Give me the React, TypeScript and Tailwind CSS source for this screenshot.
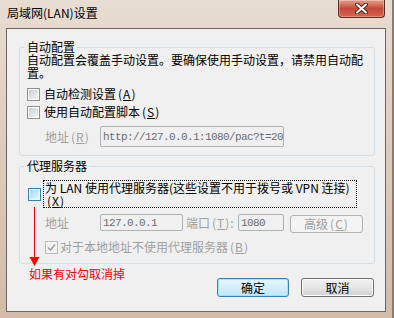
import type { ReactNode } from "react";

type BoxState = "normal" | "hot" | "disabledChecked";

const CheckBox = ({ state = "normal" }: { state?: BoxState }) => {
  if (state === "hot") {
    return (
      <span className="flex h-[13px] w-[13px] shrink-0 items-center justify-center border border-[#3c7fb1] bg-[#e6f5fd]">
        <span className="h-[9px] w-[9px] bg-linear-to-br from-[#a6d8f4] to-[#e9f7fe]" />
      </span>
    );
  }
  if (state === "disabledChecked") {
    return (
      <span className="flex h-[13px] w-[13px] shrink-0 items-center justify-center border border-[#bcbcbc] bg-[#f4f4f4]">
        <svg width="9" height="9" viewBox="0 0 9 9">
          <path d="M1 4.5 L3.5 7 L8 1.5" fill="none" stroke="#a3a3a3" strokeWidth="1.6" />
        </svg>
      </span>
    );
  }
  return (
    <span className="flex h-[13px] w-[13px] shrink-0 items-center justify-center border border-[#8f8f8f] bg-white">
      <span className="h-[9px] w-[9px] bg-linear-to-br from-[#c9cdd3] to-[#f6f6f6]" />
    </span>
  );
};

// access key, e.g. (A) with the letter underlined
const Key = ({ k }: { k: string }) => (
  <span className="ml-[2px] tracking-[1px]">
    (<span className="underline underline-offset-1">{k}</span>)
  </span>
);

const Field = ({ className, children }: { className: string; children?: ReactNode }) => (
  <div
    className={`flex shrink-0 items-center overflow-hidden whitespace-nowrap rounded-[2px] border border-[#adb2b5] bg-[#f0f0f0] pl-[2px] font-['Liberation_Mono',monospace] text-[11px] tracking-[-0.6px] text-[#6d6d6d] ${className}`}
  >
    {children}
  </div>
);

export default function App() {
  return (
    <div className="relative flex h-[318px] w-[394px] flex-col overflow-hidden border-r-2 border-[#8c7a6c] bg-linear-to-b from-[#e8ddd2] via-[#dccbbc] to-[#d3bca8] font-['Noto_Sans_CJK_SC',sans-serif] text-[12px] leading-[14px] text-black [text-spacing-trim:space-all]">
      {/* title bar */}
      <div className="flex h-[28px] shrink-0 items-start">
        <span className="ml-[7px] mt-[6px]">局域网(LAN)设置</span>
        <button className="ml-auto mr-[7px] flex h-[18px] w-[47px] items-center justify-center rounded-b-[4px] border border-t-0 border-[#5d2b22] bg-linear-to-b from-[#e5a08f] via-[#c7473a] to-[#d8644a] shadow-[inset_0_0_0_1px_rgba(255,255,255,0.3)]">
          <svg width="13" height="11" viewBox="0 0 13 11">
            <path d="M2 1.5 L11 9.5 M11 1.5 L2 9.5" stroke="#4a2520" strokeWidth="4" strokeLinecap="round" />
            <path d="M2 1.5 L11 9.5 M11 1.5 L2 9.5" stroke="#ffffff" strokeWidth="2" strokeLinecap="round" />
          </svg>
        </button>
      </div>

      {/* client area */}
      <div className="ml-[6px] flex h-[284px] w-[380px] flex-col border border-[#6b6661] bg-[#f0f0f0]">
        {/* 自动配置 */}
        <fieldset className="ml-[12px] mt-[11px] w-[356px] rounded-[3px] border border-[#d5dfe5] pb-[8px] pl-[7px] pr-[4px]">
          <legend className="-ml-[2px] px-[2px] leading-[14px]">自动配置</legend>
          <p className="-mt-[1px] leading-[13px]">
            自动配置会覆盖手动设置。要确保使用手动设置，请禁用自动配
            <br />
            置。
          </p>
          <div className="mt-[8px] flex h-[14px] items-center gap-[4px]">
            <CheckBox />
            <span>
              自动检测设置<Key k="A" />
            </span>
          </div>
          <div className="mt-[4px] flex h-[14px] items-center gap-[4px]">
            <CheckBox />
            <span>
              使用自动配置脚本<Key k="S" />
            </span>
          </div>
          <div className="mt-[7px] flex h-[21px] items-center">
            <span className="w-[73px] pl-[18px] text-[#a0a0a0]">
              地址<Key k="R" />
            </span>
            <Field className="h-[21px] w-[184px]">http://127.0.0.1:1080/pac?t=20</Field>
          </div>
        </fieldset>

        {/* 代理服务器 */}
        <fieldset className="ml-[12px] mt-[3px] w-[356px] rounded-[3px] border border-[#d5dfe5] pb-[9px] pl-[7px] pr-[4px]">
          <legend className="-ml-[2px] px-[2px] leading-[14px]">代理服务器</legend>
          <div className="mt-[7px] flex items-center">
            <span className="ml-[1px]">
              <CheckBox state="hot" />
            </span>
            <span className="ml-[2px] w-[314px] border border-dotted border-black px-[1px] leading-[13px]">
              为 LAN 使用代理服务器(这些设置不用于拨号或 VPN 连接)
              <br />
              <Key k="X" />
            </span>
          </div>
          <div className="mt-[6px] flex h-[19px] items-start">
            <span className="w-[73px] pl-[18px] leading-[17px] text-[#a0a0a0]">地址</span>
            <Field className="h-[17px] w-[83px]">127.0.0.1</Field>
            <span className="ml-[3px] w-[52px] leading-[17px] text-[#a0a0a0]">
              端口<Key k="T" />:
            </span>
            <Field className="h-[17px] w-[46px]">1080</Field>
            <span className="ml-[6px] mt-[1px] flex h-[18px] w-[73px] items-center justify-center rounded-[3px] border border-[#adb2b5] bg-[#f4f4f4] text-[#a0a0a0]">
              高级<Key k="C" />
            </span>
          </div>
          <div className="ml-[18px] mt-[7px] flex h-[14px] items-center gap-[2px] text-[#a0a0a0]">
            <CheckBox state="disabledChecked" />
            <span>
              对于本地地址不使用代理服务器<Key k="B" />
            </span>
          </div>
        </fieldset>

        {/* footer */}
        <div className="flex items-start">
          <span className="ml-[22px] mt-[3px] text-[#ff0000]">如果有对勾取消掉</span>
          <div className="ml-auto mr-[11px] mt-[14px] flex gap-[12px]">
            <button className="flex h-[19px] w-[72px] items-center justify-center rounded-[3px] border border-[#3c7fb1] bg-linear-to-b from-[#eaf6fd] via-[#d4eefb] to-[#bee6fd] shadow-[inset_0_0_0_1px_#9fe4fb] leading-[14px]">
              确定
            </button>
            <button className="flex h-[19px] w-[73px] items-center justify-center rounded-[3px] border border-[#707070] bg-linear-to-b from-[#f2f2f2] via-[#e6e6e6] to-[#d0d0d0] shadow-[inset_0_0_0_1px_#fcfcfc] leading-[14px]">
              取消
            </button>
          </div>
        </div>
      </div>

      {/* red annotation arrow */}
      <svg className="absolute left-[29px] top-[207px]" width="11" height="60" viewBox="0 0 11 60">
        <path d="M5.5 0 V52" stroke="#ff0000" strokeWidth="1" />
        <path d="M0.5 50 H10.5 L5.5 59 Z" fill="#ff0000" />
      </svg>
    </div>
  );
}
